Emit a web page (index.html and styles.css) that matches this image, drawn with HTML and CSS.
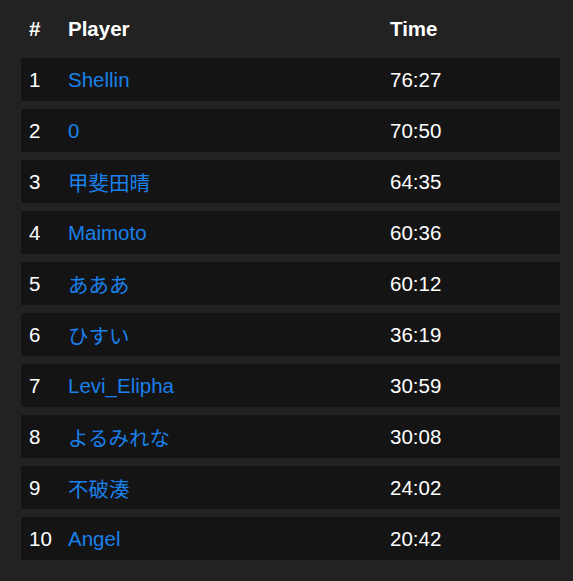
FILE: index.html
```html
<!DOCTYPE html>
<html lang="ja">
<head>
<meta charset="utf-8">
<title>Leaderboard</title>
<link rel="stylesheet" href="styles.css">
</head>
<body>
<div class="board">
  <div class="row head"><div class="c rank">#</div><div class="c name">Player</div><div class="c time">Time</div></div>
  <div class="row"><div class="c rank">1</div><div class="c name"><a href="#">Shellin</a></div><div class="c time">76:27</div></div>
  <div class="row"><div class="c rank">2</div><div class="c name"><a href="#">0</a></div><div class="c time">70:50</div></div>
  <div class="row"><div class="c rank">3</div><div class="c name"><a href="#">甲斐田晴</a></div><div class="c time">64:35</div></div>
  <div class="row"><div class="c rank">4</div><div class="c name"><a href="#">Maimoto</a></div><div class="c time">60:36</div></div>
  <div class="row"><div class="c rank">5</div><div class="c name"><a href="#">あああ</a></div><div class="c time">60:12</div></div>
  <div class="row"><div class="c rank">6</div><div class="c name"><a href="#">ひすい</a></div><div class="c time">36:19</div></div>
  <div class="row"><div class="c rank">7</div><div class="c name"><a href="#">Levi_Elipha</a></div><div class="c time">30:59</div></div>
  <div class="row"><div class="c rank">8</div><div class="c name"><a href="#">よるみれな</a></div><div class="c time">30:08</div></div>
  <div class="row"><div class="c rank">9</div><div class="c name"><a href="#">不破湊</a></div><div class="c time">24:02</div></div>
  <div class="row"><div class="c rank">10</div><div class="c name"><a href="#">Angel</a></div><div class="c time">20:42</div></div>
</div>
</body>
</html>
```
FILE: styles.css
```css
html, body {
  margin: 0;
  background: #222222;
}
body {
  font-family: "Liberation Sans", Arial, "Noto Sans CJK JP", sans-serif;
  font-size: 20.5px;
  color: #ffffff;
}
.board {
  display: grid;
  gap: 8px;
  padding: 7px 13px 20px 21px;
}
.row {
  display: grid;
  grid-template-columns: 39px 322px 1fr;
  height: 43px;
  align-items: center;
  background: #141414;
}
.row.head {
  background: transparent;
  font-weight: bold;
}
.c {
  padding-left: 8px;
  white-space: nowrap;
}
.name a {
  color: #1a80ea;
  text-decoration: none;
}
```
